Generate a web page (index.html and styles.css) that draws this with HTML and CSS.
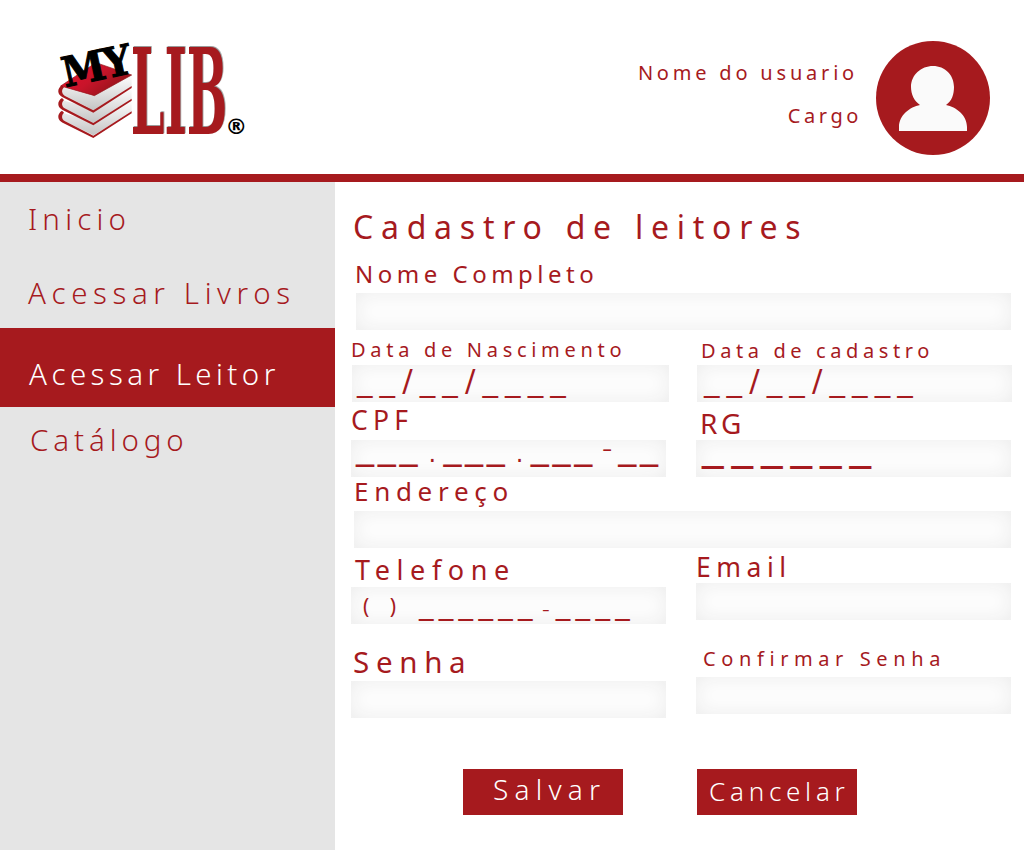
FILE: index.html
```html
<!DOCTYPE html>
<html lang="pt">
<head>
<meta charset="utf-8">
<title>MyLib - Cadastro de leitores</title>
<link rel="stylesheet" href="styles.css">
</head>
<body>
<header class="header">
  <svg class="logo" viewBox="0 0 660 360" role="img" aria-label="MyLib">
    <defs>
      <linearGradient id="cover" x1="0" y1="0" x2="1" y2="0.6">
        <stop offset="0" stop-color="#e8102c"/>
        <stop offset="0.55" stop-color="#c8142a"/>
        <stop offset="1" stop-color="#8e1418"/>
      </linearGradient>
      <linearGradient id="pages" x1="0" y1="0" x2="0" y2="1">
        <stop offset="0" stop-color="#ffffff"/>
        <stop offset="1" stop-color="#c4c4c4"/>
      </linearGradient>
      <g id="book">
        <path class="book-pages" d="M66 172 L160 198 L275 135 L275 172 L160 240 L72 196 C62 190 60 180 66 172Z"/>
        <path class="book-edge" d="M66 166 C50 176 52 194 68 202 L160 248 L275 174 L275 168 L160 241 L74 197 C64 190 64 180 72 172Z"/>
      </g>
    </defs>
    <use href="#book" y="76"/>
    <use href="#book" y="38"/>
    <use href="#book"/>
    <path class="book-top" d="M62 168 L168 98 L275 135 L163 197 Z"/>
    <text class="logo-lib" transform="translate(272 311) scale(0.96 2.38)">LIB</text>
    <text class="logo-my" transform="translate(76 172) rotate(-12) scale(1 1.05)">MY</text>
    <text class="logo-r" x="556" y="312">®</text>
  </svg>
  <div class="user">
    <div class="user-text">
      <span class="user-name">Nome do usuario</span>
      <span class="user-role">Cargo</span>
    </div>
    <svg class="avatar" viewBox="0 0 114 114" aria-hidden="true">
      <circle cx="57" cy="57" r="57" fill="#a61a1e"/>
      <path fill="#fafafa" d="M23 90 L91 90 L91 86 C91 74 80 66 70 64 C76 60 78 53 78 46 C78 34 69 25 57 25 C45 25 35 34 35 46 C35 53 38 60 44 64 C34 66 23 74 23 86Z"/>
    </svg>
  </div>
</header>
<div class="layout">
  <nav class="sidebar">
    <a class="nav-item nav-first">Inicio</a>
    <a class="nav-item nav-books">Acessar Livros</a>
    <a class="nav-item nav-active">Acessar Leitor</a>
    <a class="nav-item nav-catalog">Catálogo</a>
  </nav>
  <main class="main">
    <div class="form">
      <h1 class="title">Cadastro de leitores</h1>
      <div class="row row-nome">
        <div class="field span nome">
          <label class="label l-nome">Nome Completo</label>
          <div class="input"></div>
        </div>
      </div>
      <div class="row row-data">
        <div class="field data1">
          <label class="label l-nasc">Data de Nascimento</label>
          <div class="input mask m-date">__/__/____</div>
        </div>
        <div class="field data2">
          <label class="label l-cad">Data de cadastro</label>
          <div class="input mask m-date2">__/__/____</div>
        </div>
      </div>
      <div class="row row-doc">
        <div class="field">
          <label class="label l-cpf">CPF</label>
          <div class="input mask m-cpf">___<span class="dot">.</span>___<span class="dot">.</span>___<span class="dash">-</span>__</div>
        </div>
        <div class="field">
          <label class="label l-rg">RG</label>
          <div class="input mask m-rg">______</div>
        </div>
      </div>
      <div class="row row-end">
        <div class="field span endereco">
          <label class="label l-end">Endereço</label>
          <div class="input"></div>
        </div>
      </div>
      <div class="row row-tel">
        <div class="field">
          <label class="label l-tel">Telefone</label>
          <div class="input mask m-tel"><span class="paren">( )</span>______<span class="dash-small">-</span>____</div>
        </div>
        <div class="field raised">
          <label class="label l-email">Email</label>
          <div class="input"></div>
        </div>
      </div>
      <div class="row row-senha">
        <div class="field">
          <label class="label l-senha">Senha</label>
          <div class="input"></div>
        </div>
        <div class="field raised">
          <label class="label l-conf">Confirmar Senha</label>
          <div class="input"></div>
        </div>
      </div>
      <div class="actions">
        <button class="btn btn-save">Salvar</button>
        <button class="btn btn-cancel">Cancelar</button>
      </div>
    </div>
  </main>
</div>
</body>
</html>
```
FILE: styles.css
```css
* { box-sizing: border-box; }
html, body { margin: 0; padding: 0; }
body {
  width: 1024px;
  height: 850px;
  overflow: hidden;
  background: #fff;
  color: #a61a1e;
  font-family: "Noto Sans", sans-serif;
  font-weight: 400;
}

/* Header */
.header {
  height: 182px;
  border-bottom: 8px solid #a61a1e;
  display: flex;
  justify-content: space-between;
  padding: 30px 34px 0 40px;
}
.logo { width: 220px; height: 120px; display: block; overflow: visible; }
.book-pages { fill: url(#pages); }
.book-edge { fill: #a61a1e; }
.book-top { fill: url(#cover); stroke: #8e1418; stroke-width: 2; }
.logo-lib, .logo-my {
  font-family: "DejaVu Serif", serif;
  font-weight: 700;
}
.logo-lib { font-size: 150px; fill: #a61a1e; filter: drop-shadow(2.5px -0.5px 0 #808080); }
.logo-my { font-size: 118px; fill: #000; stroke: #000; stroke-width: 3; letter-spacing: -4px; }
.logo-r { font-family: "DejaVu Sans", sans-serif; font-weight: 700; font-size: 66px; fill: #000; }

.user { display: flex; align-items: flex-start; gap: 16px; padding-top: 11px; }
.user-text {
  display: flex;
  flex-direction: column;
  align-items: flex-end;
  padding-top: 20px;
  font-size: 20px;
  line-height: 24px;
  gap: 19px;
}
.user-name { margin-right: 2px; letter-spacing: 3.8px; }
.user-role { margin-right: -2px; letter-spacing: 3.6px; }
.avatar { width: 114px; height: 114px; display: block; }

/* Layout */
.layout { display: flex; height: 668px; }
.sidebar {
  width: 335px;
  background: #e5e5e5;
  display: flex;
  flex-direction: column;
  font-size: 29.5px;
  font-weight: 300;
  letter-spacing: 5.2px;
}
.nav-item { display: block; line-height: 34px; padding-left: 28px; }
.nav-first { margin-top: 20px; }
.nav-books { margin-top: 40px; letter-spacing: 5.6px; }
.nav-active {
  margin-top: 18px;
  background: #a61a1e;
  color: #fff;
  height: 79px;
  line-height: 92px;
  padding-left: 29px;
  letter-spacing: 4.45px;
}
.nav-catalog { margin-top: 16px; padding-left: 30px; letter-spacing: 4.9px; }

/* Form */
.main { flex: 1; padding-left: 16px; }
.form { display: flex; flex-direction: column; }
.title {
  margin: 0;
  padding-left: 2px;
  height: 73px;
  padding-top: 24px;
  font-size: 32px;
  font-weight: 400;
  line-height: 42px;
  letter-spacing: 7.75px;
}
.row {
  display: grid;
  grid-template-columns: 315px 315px;
  column-gap: 30px;
  align-items: end;
}
.row-nome { height: 75px; }
.row-data { height: 72px; }
.row-doc { height: 75px; }
.row-end { height: 71px; }
.row-tel { height: 76px; }
.row-senha { height: 94px; }
.field { display: flex; flex-direction: column; }
.span { grid-column: 1 / 3; }
.nome { margin-left: 5px; }
.endereco { margin-left: 3px; }
.data1 { margin-left: 1px; margin-right: -3px; }
.data2 { margin-left: 1px; margin-right: -1px; }
.raised { margin-bottom: 4px; }
.input {
  height: 37px;
  background: #fdfdfd;
  box-shadow: inset 0 0 20px #ececec;
  white-space: nowrap;
}
.label { display: block; line-height: 24px; }
.l-nome { font-size: 24px; letter-spacing: 4.5px; margin-bottom: 7px; margin-left: -1px; }
.l-nasc { font-size: 20px; letter-spacing: 4.7px; margin-bottom: 3px; margin-left: -1px; }
.l-cad { font-size: 20px; letter-spacing: 4.6px; margin-bottom: 2px; margin-left: 4px; }
.l-cpf { font-size: 26.5px; letter-spacing: 5.2px; margin-bottom: 8px; }
.l-rg { font-size: 28px; letter-spacing: 3.5px; margin-bottom: 5px; margin-left: 4px; }
.l-end { font-size: 26px; letter-spacing: 5.7px; margin-bottom: 8px; }
.l-tel { font-size: 27px; letter-spacing: 6.6px; margin-bottom: 5px; margin-left: 4px; }
.l-email { font-size: 26.5px; letter-spacing: 5.5px; margin-bottom: 4px; }
.l-senha { font-size: 29.5px; letter-spacing: 6.7px; margin-bottom: 7px; margin-left: 2px; }
.l-conf { font-size: 20px; letter-spacing: 5.6px; margin-bottom: 6px; margin-left: 7px; }

.mask { font-family: "DejaVu Sans", sans-serif; font-weight: 400; line-height: 30px; }
.m-date, .m-date2 { font-size: 31px; letter-spacing: 7.1px; padding-left: 5px; }
.m-date2 { padding-left: 7px; }
.m-cpf { font-size: 36px; letter-spacing: 3.7px; padding-left: 5px; line-height: 14px; }
.dot, .dash, .dash-small { display: inline-block; letter-spacing: 0; text-align: center; line-height: 0; }
.dot { font-size: 24px; width: 22.3px; transform: translateY(3px); }
.dash { font-family: "Noto Sans", sans-serif; font-weight: 300; font-size: 32px; width: 22.3px; }
.m-rg { font-size: 43px; letter-spacing: 8px; padding-left: 6px; line-height: 8px; }
.m-tel { font-size: 29px; letter-spacing: 5.3px; padding-left: 12px; line-height: 34px; }
.paren { font-family: "Noto Sans", sans-serif; font-size: 21px; letter-spacing: 6px; display: inline-block; width: 56px; word-spacing: 3px; line-height: 0; }
.dash-small { font-family: "Noto Sans", sans-serif; font-weight: 300; font-size: 24px; width: 18px; transform: translate(-1px, 3px); }

/* Buttons */
.actions { display: flex; margin-top: 51px; padding-left: 112px; gap: 74px; }
.btn {
  width: 160px;
  height: 46px;
  border: 0;
  padding: 0;
  background: #a61a1e;
  color: #fff;
  font-family: inherit;
  font-weight: 300;
}
.btn-save { font-size: 28px; letter-spacing: 6.2px; padding: 0 0 6px 30px; text-align: left; }
.btn-cancel { font-size: 26px; letter-spacing: 4.75px; text-align: left; padding: 0 0 2px 12px; }
```
